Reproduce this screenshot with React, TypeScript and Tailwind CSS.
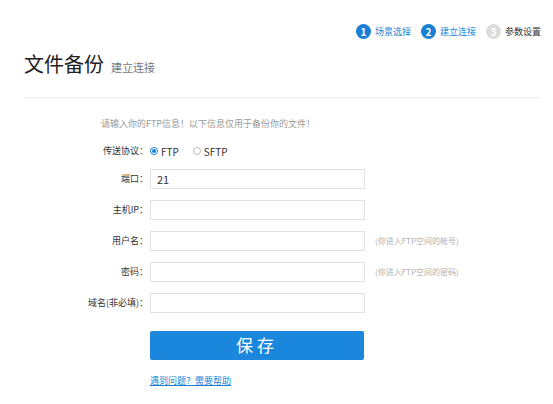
const font = { fontFamily: '"Noto Sans CJK SC", "Noto Sans", sans-serif' }

function Step({ n, label, active }: { n: number; label: string; active: boolean }) {
  return (
    <div className="flex items-center gap-[4px]">
      <span
        className={
          active
            ? 'flex h-[15px] w-[15px] items-center justify-center rounded-full bg-[#1a7fd4] text-[10px] font-bold leading-none text-white'
            : 'flex h-[15px] w-[15px] items-center justify-center rounded-full bg-[#dcdcdc] text-[10px] font-bold leading-none text-white'
        }
      >
        {n}
      </span>
      <span className={active ? 'text-[9px] text-[#1a7fd4]' : 'text-[9px] text-[#333]'}>{label}</span>
    </div>
  )
}

function Row({ label, value, hint }: { label: string; value?: string; hint?: string }) {
  return (
    <div className="flex h-[20px] items-center">
      <div className="w-[150px] pr-[2px] text-right text-[9px] text-[#333]">{label}：</div>
      <input
        defaultValue={value}
        className="h-[20px] w-[215px] border border-[#e2e2e2] bg-white px-[6px] text-[11px] text-[#333] outline-none"
      />
      {hint && <span className="ml-[10px] text-[8px] text-[#b0b0b0]">{hint}</span>}
    </div>
  )
}

export default function App() {
  return (
    <div className="h-[404px] w-[553px] bg-white" style={font}>
      <div className="flex justify-end gap-[10px] pr-[12px] pt-[24px]">
        <Step n={1} label="场景选择" active />
        <Step n={2} label="建立连接" active />
        <Step n={3} label="参数设置" active={false} />
      </div>
      <div className="ml-[24px] mr-[13px] mt-[12px] flex items-end gap-[7px] border-b border-[#ececec] pb-[20px]">
        <h1 className="text-[20px] leading-[26px] text-[#222]">文件备份</h1>
        <span className="mb-[2px] text-[11px] text-[#777]">建立连接</span>
      </div>
      <p className="ml-[101px] mt-[19px] text-[9px] text-[#999]">请输入你的FTP信息！以下信息仅用于备份你的文件！</p>
      <div className="mt-[13px] flex items-center text-[9px] text-[#333]">
        <div className="w-[150px] pr-[2px] text-right">传送协议：</div>
        <label className="flex items-center gap-[3px] text-[10px]">
          <span className="flex h-[8px] w-[8px] items-center justify-center rounded-full border border-[#1a7fd4]">
            <span className="h-[4px] w-[4px] rounded-full bg-[#1a7fd4]" />
          </span>
          FTP
        </label>
        <label className="ml-[14px] flex items-center gap-[3px] text-[10px]">
          <span className="h-[8px] w-[8px] rounded-full border border-[#bbb]" />
          SFTP
        </label>
      </div>
      <div className="mt-[10px] flex flex-col gap-[11px]">
        <Row label="端口" value="21" />
        <Row label="主机IP" />
        <Row label="用户名" hint="(你进入FTP空间的帐号)" />
        <Row label="密码" hint="(你进入FTP空间的密码)" />
        <Row label="域名(非必填)" />
      </div>
      <button className="ml-[150px] mt-[18px] flex h-[29px] w-[214px] items-center justify-center rounded-[2px] bg-[#1a86dc] text-[17px] tracking-[4px] text-white">
        保存
      </button>
      <a className="ml-[150px] mt-[14px] block text-[9px] text-[#1a7fd4] underline">遇到问题？需要帮助</a>
    </div>
  )
}
